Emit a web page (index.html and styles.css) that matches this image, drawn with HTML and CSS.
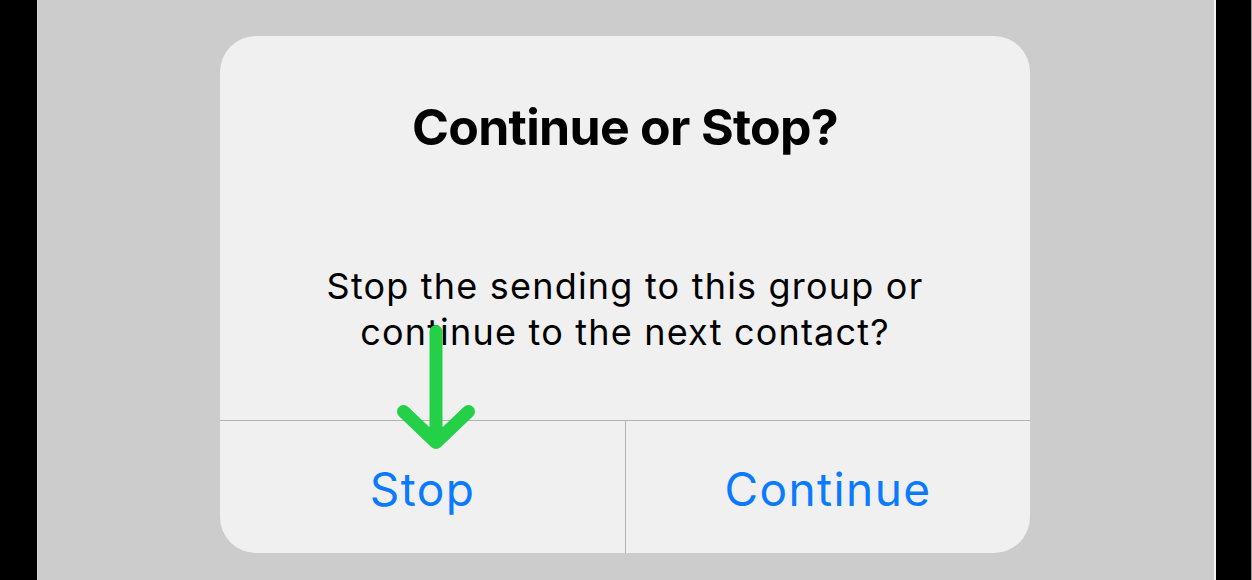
FILE: index.html
```html
<!DOCTYPE html>
<html lang="en">
<head>
<meta charset="utf-8">
<title>Continue or Stop?</title>
<link rel="stylesheet" href="styles.css">
</head>
<body>
<div class="frame">
  <div class="edge edge-left"></div>
  <main class="screen">
    <section class="alert">
      <h1 class="alert-title">Continue or Stop?</h1>
      <p class="alert-message">Stop the sending to this group or<br>continue to the next contact?</p>
      <div class="alert-actions">
        <button class="alert-btn">Stop</button>
        <button class="alert-btn">Continue</button>
      </div>
    </section>
    <svg class="pointer" width="100" height="140" viewBox="0 0 100 140" aria-hidden="true">
      <path d="M50 7.5 V118 M17.5 87.5 L50 118.5 L82.5 87.5" fill="none" stroke="#23d047" stroke-width="13" stroke-linecap="round" stroke-linejoin="round"/>
    </svg>
  </main>
  <div class="edge edge-right"></div>
</div>
</body>
</html>
```

FILE: styles.css
```css
html, body {
  margin: 0;
  padding: 0;
  background: #000;
}
body {
  font-family: Inter, "Noto Sans", "Liberation Sans", sans-serif;
  width: 1252px;
  height: 580px;
  overflow: hidden;
}
.frame {
  display: flex;
  height: 580px;
}
.edge {
  background: #000;
  height: 100%;
}
.edge-left {
  width: 37px;
  border-right: 1px solid #d6d6d6;
}
.edge-right {
  width: 35px;
  border-left: 2px solid #f4f4f4;
  border-right: 1px solid #9a9a9a;
}
.screen {
  position: relative;
  flex: 1;
  background: #cccccc;
  display: flex;
  justify-content: center;
  align-items: flex-start;
  padding-top: 36px;
  box-sizing: border-box;
}
.alert {
  width: 810px;
  height: 517px;
  margin-left: -2px;
  background: #f0f0f0;
  border-radius: 36px;
  overflow: hidden;
  display: flex;
  flex-direction: column;
  text-align: center;
  color: #000;
}
.alert-title {
  margin: 0;
  padding-top: 61px;
  font-size: 50px;
  line-height: 60px;
  font-weight: 700;
  letter-spacing: -0.7px;
}
.alert-message {
  margin: 106px 0 0;
  font-size: 36px;
  line-height: 46px;
  font-weight: 400;
  letter-spacing: 1.2px;
  height: 157px;
  border-bottom: 1px solid #b3b3b3;
}
.alert-actions {
  flex: 1;
  display: grid;
  grid-template-columns: 405px 1fr;
}
.alert-btn {
  border: 0;
  background: transparent;
  font-family: inherit;
  font-size: 46px;
  line-height: 128px;
  padding: 4px 0 0 0;
  letter-spacing: 1.4px;
  color: #0a7aff;
  height: 132px;
}
.alert-btn + .alert-btn {
  border-left: 1px solid #b3b3b3;
}
.pointer {
  position: absolute;
  left: 348px;
  top: 324px;
}
```
